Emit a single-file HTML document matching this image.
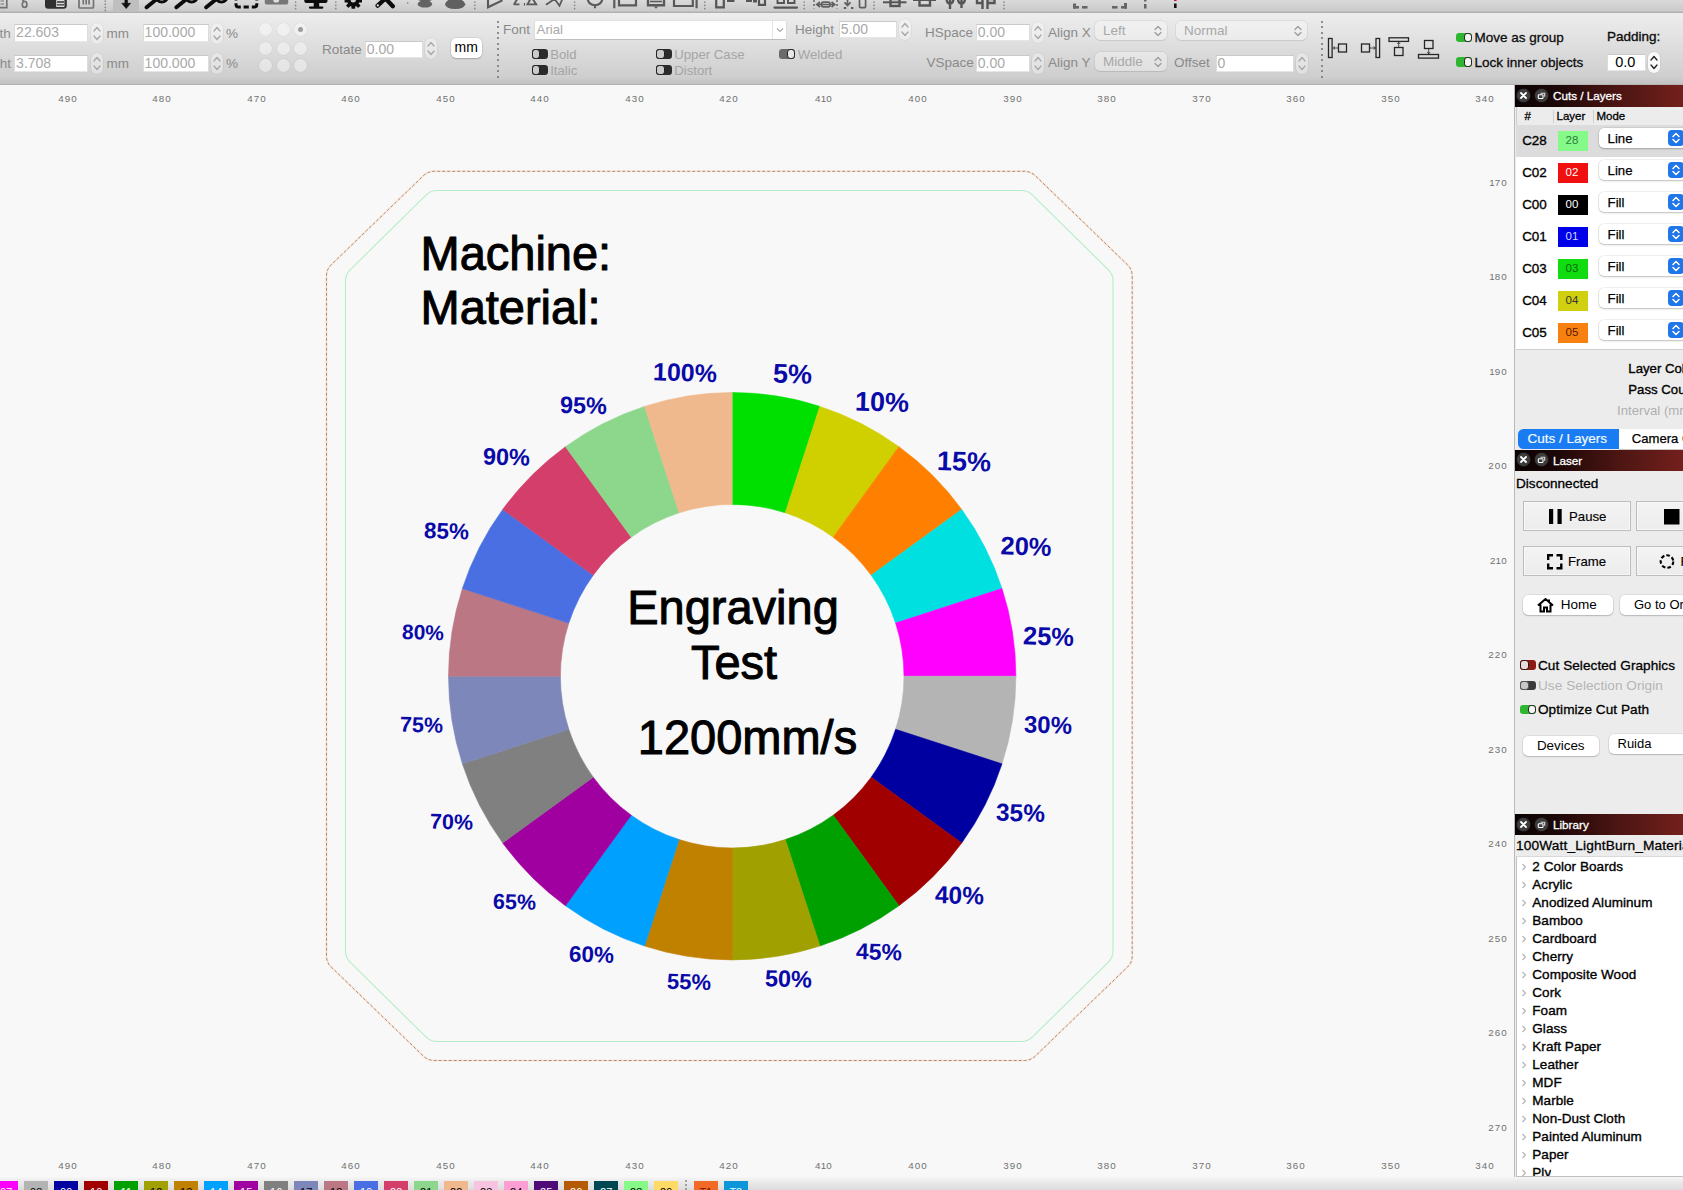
<!DOCTYPE html>
<html><head><meta charset="utf-8"><title>LightBurn - Engraving Test</title>
<style>
*{box-sizing:border-box;margin:0;padding:0}
html,body{width:1683px;height:1190px;overflow:hidden;background:#f8f8f8;font-family:"Liberation Sans",sans-serif;font-size:13px;color:#000}
.abs{position:absolute}
#top{position:absolute;left:0;top:0;width:1683px;height:13px;background:linear-gradient(#dadada,#cbcbcb 82%,#a9a9a9);overflow:hidden}
#tb{position:absolute;left:0;top:13px;width:1683px;height:72px;background:linear-gradient(#ededed,#e2e2e2 35%,#cecece 90%,#c2c2c2);border-bottom:1px solid #b4b4b4}
#canvas{position:absolute;left:0;top:85px;width:1515px;height:1092px;background:#f8f8f8;overflow:hidden}
#side{position:absolute;left:1514px;top:85px;width:169px;height:1092px;background:#ececec;overflow:hidden;border-left:1px solid #b9b9b9;padding:0}
#side>div,#side>svg{margin-left:0}
#bot{position:absolute;left:0;top:1176.5px;width:1683px;height:13.5px;background:linear-gradient(#f6f6f6,#ebebeb 35%,#dcdcdc);overflow:hidden}
.t{position:absolute;white-space:nowrap;line-height:16px;height:16px}
.g{color:#8a8a8a}
.inp{position:absolute;background:#fff;border-top:1px solid #c9c9c9;border-left:1px solid #dcdcdc;border-right:1px solid #dcdcdc;border-bottom:1px solid #e6e6e6;color:#a9a9a9;font-size:14px;line-height:15.6px;padding-left:.8px;white-space:nowrap;overflow:hidden}
.stp{position:absolute;width:12px;height:21px;border-radius:6px;background:rgba(255,255,255,.35);box-shadow:0 0 0 .5px rgba(0,0,0,.08)}
.dd{position:absolute;border-radius:5px;background:rgba(255,255,255,.35);box-shadow:0 0 0 .5px rgba(0,0,0,.10),0 1px 1px rgba(0,0,0,.06);color:#a8a8a8;font-size:13.5px;line-height:18px;padding-left:8px;padding-top:.8px;white-space:nowrap}
.btnw{position:absolute;border-radius:5px;background:#fff;box-shadow:0 0 0 .5px rgba(0,0,0,.12),0 1px 1.5px rgba(0,0,0,.18);font-size:13px;text-align:center;white-space:nowrap}
.tog{position:absolute;width:16.4px;height:9.4px;border-radius:3.2px}
.tog i{position:absolute;top:0;width:8.6px;height:9.4px;border-radius:3.2px;border:1.2px solid #1c1c1c;background:#ddd}
.rn{position:absolute;font-size:9.8px;letter-spacing:1px;color:#707070;line-height:12px;height:12px;width:40px;text-align:center;white-space:nowrap;padding-left:.7px}
.hdr{position:absolute;left:0;width:168px;height:21.5px;background:linear-gradient(90deg,#0a0202 0%,#1c0707 25%,#4a1512 60%,#74201c 100%);color:#fff;font-size:11.7px;line-height:22.5px;white-space:nowrap;-webkit-text-stroke:.3px #fff}
.hdr b{position:absolute;top:3.8px;width:13px;height:13px;border-radius:7px;background:#3d3d3d;box-shadow:0 0 1.5px #4a4a4a}
.hdr b svg{display:block}
.row{position:absolute;left:1px;width:167px;height:32px;background:#fff}
.sw{position:absolute;left:42px;top:6px;width:30px;height:20px;font-size:11.5px;line-height:19.4px;text-align:center;padding-right:2px}
.cn{position:absolute;left:6.2px;top:8.3px;font-size:13.4px;line-height:16px;-webkit-text-stroke:.35px #000}
.md{position:absolute;left:83px;top:3px;width:90px;height:20px;border-radius:5px;background:#fff;box-shadow:0 0 0 .5px rgba(0,0,0,.10),0 1px 2px rgba(0,0,0,.22);font-size:13.2px;line-height:21.6px;padding-left:8.6px;-webkit-text-stroke:.25px #000}
.md u{position:absolute;left:69px;top:2px;width:16px;height:16px;border-radius:4px;background:#1f76e8}
.li{position:absolute;left:17.3px;font-size:13.5px;letter-spacing:.05px;line-height:18px;height:18px;white-space:nowrap;-webkit-text-stroke:.35px #000}
.ch{position:absolute;left:6px;width:6px;height:18px}
.pal{position:absolute;top:4.5px;width:24px;height:12px;font-size:11px;line-height:14px;text-align:center;padding-top:3.5px}
</style></head><body>

<div id="top"><svg width="1683" height="13" viewBox="0 0 1683 13">
<rect x="113" y="0" width="26" height="12" fill="#bfbfbf"/>
<g fill="none" stroke="#737373" stroke-width="1.7">
<path d="M-2 -3H6.8V7.6H-2"/><path d="M0.5 1H4M0.5 4H4" stroke-width="1.1"/>
<ellipse cx="24.6" cy="4.4" rx="2.3" ry="3"/><path d="M22 -1L24 2"/>
<path d="M79 -2V7.5Q79 8 80 8H92.5Q93.5 8 93.5 7V-2M83.3 -2V4.6M86.2 -2V4.6M89.1 -2V4.6"/>
</g>
<path d="M45 -2H66.8V5.5Q66.8 8.7 63.6 8.7H48.2Q45 8.7 45 5.5Z" fill="#303030"/>
<path d="M56.2 -1H64.4V7H56.2Z" fill="#dcdcdc"/><path d="M57 2H64M57 4.9H64" stroke="#303030" stroke-width="1.4"/>
<g fill="#858585"><circle cx="105.3" cy="1" r=".85"/><circle cx="105.3" cy="4.2" r=".85"/><circle cx="105.3" cy="7.4" r=".85"/><circle cx="105.3" cy="10.4" r=".85"/></g>
<path d="M124.9 -2H127.5V3.3H130.6L126.2 8.6L121.8 3.3H124.9Z" fill="#111" stroke="#111" stroke-width=".6" stroke-linejoin="round"/>
<g stroke="#0c0c0c" stroke-width="3.9" stroke-linecap="round" fill="none">
<path d="M146.6 7.3L155.6 0"/><path d="M176.4 7.3L185.4 0"/><path d="M206.2 7.3L215.2 0"/>
</g>
<g stroke="#0c0c0c" stroke-width="3" fill="none"><circle cx="161.8" cy="-3.6" r="5.7"/><circle cx="191.6" cy="-3.6" r="5.7"/><circle cx="221.4" cy="-3.6" r="5.7"/></g>
<g fill="none" stroke="#0c0c0c" stroke-width="3" stroke-linecap="butt">
<path d="M236 3.2V4.5Q236 7 238.5 7H240.8"/><path d="M243.6 7H248.8"/><path d="M251.8 7H254.3Q256.8 7 256.8 4.5V3.2"/>
<path d="M236 -2V0.5M256.8 -2V0.5"/>
</g>
<path d="M264.8 -3H288.2V2.4Q288.2 4.6 286 4.6H267Q264.8 4.6 264.8 2.4Z" fill="#777"/><circle cx="276.2" cy="-0.4" r="3" fill="#dedede"/>
<g fill="#858585"><circle cx="295.6" cy="2" r=".85"/><circle cx="295.6" cy="5.3" r=".85"/><circle cx="295.6" cy="8.6" r=".85"/>
<circle cx="335.8" cy="2" r=".85"/><circle cx="335.8" cy="5.3" r=".85"/><circle cx="335.8" cy="8.6" r=".85"/></g>
<path d="M304.3 -2H327.5V1Q327.5 3 325.5 3H319.2V6.5H322.3Q323.4 6.5 323.4 7.6Q323.4 8.7 322.3 8.7H310Q308.9 8.7 308.9 7.6Q308.9 6.5 310 6.5H313.7V3H306.3Q304.3 3 304.3 1Z" fill="#0c0c0c"/>
<g fill="#0c0c0c"><circle cx="353.3" cy="0.6" r="6.1"/><rect x="351.4" y="5" width="3.8" height="3.7" rx=".6"/><rect x="344.6" y="-1.2" width="3.4" height="3.7" rx=".6"/><rect x="358.6" y="-1.2" width="3.4" height="3.7" rx=".6"/>
<rect x="346.7" y="3.7" width="3.6" height="3.6" rx=".6" transform="rotate(45 348.5 5.5)"/><rect x="356.3" y="3.7" width="3.6" height="3.6" rx=".6" transform="rotate(45 358.1 5.5)"/></g>
<circle cx="353.3" cy="-0.2" r="2.7" fill="#cdcdcd"/>
<g stroke="#0c0c0c" stroke-width="4.3" stroke-linecap="round"><path d="M377.6 5.6L385.5 -1.5"/><path d="M392.8 6.2L385.5 -1.5"/></g><circle cx="377.8" cy="5.4" r="1.1" fill="#e8e8e8"/>
<circle cx="407.7" cy="3" r=".8" fill="#777"/>
<path d="M417.5 4.5Q418 1.5 421 1Q417 0 414.5 -2H435.5Q433 0 429.5 1Q432 2 432.3 4.5Q431 7.6 425 7.6Q419 7.6 417.5 4.5Z" fill="#636363"/>
<path d="M445 4.2Q446.5 -1 455.2 -2Q463.6 -1 465.3 4.2Q464.5 8.9 455.2 9Q445.8 8.9 445 4.2Z" fill="#606060"/>
<g fill="#858585"><circle cx="474.8" cy="2" r=".85"/><circle cx="474.8" cy="5.3" r=".85"/><circle cx="474.8" cy="8.6" r=".85"/></g>
<g fill="none" stroke="#5a5a5a" stroke-width="2.1">
<path d="M488 -2V7.3L502.5 0.3"/>
<path d="M514 4.4L518.5 -3M519.5 4.4H513.5M527.5 4.4L531.5 -3L536.2 4.4Z" stroke-width="1.9"/><path d="M524.5 3V5.5" stroke-width="1.2"/>
<path d="M546 4.8L556 -2M553.5 -2.5L559.5 5.8L563 -2.5" stroke-width="1.8"/>
<path d="M587.3 -3Q587.8 4.8 595 5.2Q602.2 4.8 602.7 -3M595 5V8.3"/>
</g>
<g fill="#858585"><circle cx="574.6" cy="2" r=".85"/><circle cx="574.6" cy="5.3" r=".85"/><circle cx="574.6" cy="8.6" r=".85"/></g>
<g fill="none" stroke="#5a5a5a" stroke-width="2.2">
<path d="M614.3 -3V8.2M619 -3V5.3H636V-3"/>
<path d="M648 -2V5.3H664V-2" stroke-width="2.4"/><path d="M650 1.5H662" stroke-width="1.6"/><path d="M654.5 6.3l1.5 1.6 1.5-1.6" stroke-width="1.1"/>
<path d="M674 -3V6H692.8V-3M696.6 -3V8.2"/>
</g>
<g fill="#858585"><circle cx="704.8" cy="2" r=".85"/><circle cx="704.8" cy="5.3" r=".85"/><circle cx="704.8" cy="8.6" r=".85"/></g>
<g fill="none" stroke="#555" stroke-width="2.2">
<path d="M716.2 -3V7.3H723.8V-3"/><path d="M759 -3V4.8H765V-3"/><path d="M774.5 7.6H797" stroke-width="2.3" stroke-linecap="round"/><path d="M777.5 -2V3H784V-2M788 -2V3H794.5V-2" stroke-width="1.9"/>
</g>
<rect x="727" y="-1" width="7.5" height="3" fill="#555"/><rect x="746" y="-1" width="6" height="3" fill="#555"/><rect x="753" y="-1" width="4" height="3.5" fill="#555"/>
<g fill="#858585"><circle cx="804.2" cy="2" r=".85"/><circle cx="804.2" cy="5.3" r=".85"/><circle cx="804.2" cy="8.6" r=".85"/></g>
<g fill="none" stroke="#606060" stroke-width="1.7">
<path d="M817 4.5H834M820 2L816.8 4.5L820 7M831.5 2L834.7 4.5L831.5 7"/><rect x="821.5" y="2.1" width="8.5" height="4.8" rx="1.8"/>
<path d="M814 0V8.5M837 0V8.5" stroke-dasharray="2 2" stroke-width="1.4"/>
<path d="M847.5 -2V5M844.5 2.3L847.5 5.5L850.5 2.3"/><path d="M843.8 8H846.2M851 8H853.4" stroke-width="1.9"/>
<path d="M859.5 -3V6.6Q859.5 7.6 860.5 7.6H864.6Q865.6 7.6 865.6 6.6V-3"/>
</g>
<g fill="#858585"><circle cx="874" cy="2" r=".85"/><circle cx="874" cy="5.3" r=".85"/><circle cx="874" cy="8.6" r=".85"/></g>
<g fill="none" stroke="#555" stroke-width="2">
<path d="M883 2.3H906.5"/><rect x="890.5" y="-1" width="9" height="7" stroke-width="2.4"/>
<path d="M913 0H936"/><path d="M919.5 0V5.5H930V0" stroke-width="2.4"/>
<path d="M950 -2V9M946.5 -2Q946.5 3.5 950 3.5Q953.5 3.5 953.5 -2M961.5 -2V8M958 -2Q958 3.5 961.5 3.5Q965 3.5 965 -2" stroke-width="2.4"/>
<path d="M977 -2V3H983.5M982.5 -2V9M987.5 9V-1H994.5V3H988" stroke-width="2.4"/>
</g>
<g fill="#858585"><circle cx="1004" cy="2" r=".85"/><circle cx="1004" cy="5.3" r=".85"/><circle cx="1004" cy="8.6" r=".85"/></g>
<g fill="#666"><rect x="1073" y="3.5" width="3" height="5"/><rect x="1073" y="6" width="6" height="2.6"/><rect x="1082" y="6" width="5.5" height="2.6"/>
<rect x="1112" y="6" width="5.5" height="2.6"/><rect x="1121" y="6" width="6" height="2.6"/><rect x="1124" y="3" width="3" height="5.6"/>
<rect x="1144" y="4" width="2.5" height="4.5"/><rect x="1144" y="0" width="2.5" height="1.5"/></g>
<rect x="1174" y="3.5" width="2.6" height="4.5" fill="#111"/><rect x="1174" y="-1" width="2.6" height="2" fill="#c03"/>

</svg></div>
<div id="tb">
<div class="t g" style="left:-40px;width:50.7px;text-align:right;top:12.7px;font-size:13.5px">Width</div>
<div class="t g" style="left:-40px;width:51px;text-align:right;top:42.7px;font-size:13.5px">Height</div>
<div class="inp" style="left:14.3px;top:11.399999999999999px;width:74.2px;height:17.2px;">22.603</div>
<div class="inp" style="left:14.3px;top:41.6px;width:74.2px;height:17.2px;">3.708</div>
<div class="stp" style="left:91px;top:10px"><svg width="12" height="21" viewBox="0 0 12 21"><path d="M3 8L6 4.5L9 8M3 13L6 16.5L9 13" fill="none" stroke="#a8a8a8" stroke-width="1.3" stroke-linecap="round" stroke-linejoin="round"/></svg></div>
<div class="stp" style="left:91px;top:40px"><svg width="12" height="21" viewBox="0 0 12 21"><path d="M3 8L6 4.5L9 8M3 13L6 16.5L9 13" fill="none" stroke="#a8a8a8" stroke-width="1.3" stroke-linecap="round" stroke-linejoin="round"/></svg></div>
<div class="t g" style="left:106.5px;top:12.7px;font-size:13.5px;">mm</div>
<div class="t g" style="left:106.5px;top:42.7px;font-size:13.5px;">mm</div>
<div class="inp" style="left:142.8px;top:11.399999999999999px;width:66.2px;height:17.2px;">100.000</div>
<div class="inp" style="left:142.8px;top:41.6px;width:66.2px;height:17.2px;">100.000</div>
<div class="stp" style="left:211px;top:10px"><svg width="12" height="21" viewBox="0 0 12 21"><path d="M3 8L6 4.5L9 8M3 13L6 16.5L9 13" fill="none" stroke="#a8a8a8" stroke-width="1.3" stroke-linecap="round" stroke-linejoin="round"/></svg></div>
<div class="stp" style="left:211px;top:40px"><svg width="12" height="21" viewBox="0 0 12 21"><path d="M3 8L6 4.5L9 8M3 13L6 16.5L9 13" fill="none" stroke="#a8a8a8" stroke-width="1.3" stroke-linecap="round" stroke-linejoin="round"/></svg></div>
<div class="t g" style="left:226px;top:12.7px;font-size:13.5px;">%</div>
<div class="t g" style="left:226px;top:42.7px;font-size:13.5px;">%</div>
<div class="abs" style="left:259.3px;top:10.100000000000001px;width:13px;height:13px;border-radius:7px;background:rgba(255,255,255,.42);box-shadow:0 0 0 .5px rgba(0,0,0,.06)"></div>
<div class="abs" style="left:276.5px;top:10.100000000000001px;width:13px;height:13px;border-radius:7px;background:rgba(255,255,255,.42);box-shadow:0 0 0 .5px rgba(0,0,0,.06)"></div>
<div class="abs" style="left:293.5px;top:10.100000000000001px;width:13px;height:13px;border-radius:7px;background:rgba(255,255,255,.42);box-shadow:0 0 0 .5px rgba(0,0,0,.06)"></div>
<div class="abs" style="left:259.3px;top:28.5px;width:13px;height:13px;border-radius:7px;background:rgba(255,255,255,.42);box-shadow:0 0 0 .5px rgba(0,0,0,.06)"></div>
<div class="abs" style="left:276.5px;top:28.5px;width:13px;height:13px;border-radius:7px;background:rgba(255,255,255,.42);box-shadow:0 0 0 .5px rgba(0,0,0,.06)"></div>
<div class="abs" style="left:293.5px;top:28.5px;width:13px;height:13px;border-radius:7px;background:rgba(255,255,255,.42);box-shadow:0 0 0 .5px rgba(0,0,0,.06)"></div>
<div class="abs" style="left:259.3px;top:46.3px;width:13px;height:13px;border-radius:7px;background:rgba(255,255,255,.42);box-shadow:0 0 0 .5px rgba(0,0,0,.06)"></div>
<div class="abs" style="left:276.5px;top:46.3px;width:13px;height:13px;border-radius:7px;background:rgba(255,255,255,.42);box-shadow:0 0 0 .5px rgba(0,0,0,.06)"></div>
<div class="abs" style="left:293.5px;top:46.3px;width:13px;height:13px;border-radius:7px;background:rgba(255,255,255,.42);box-shadow:0 0 0 .5px rgba(0,0,0,.06)"></div>
<div class="abs" style="left:297.5px;top:14.100000000000001px;width:5px;height:5px;border-radius:3px;background:#9c9c9c"></div>
<div class="t g" style="left:322px;top:28.7px;font-size:13.5px;">Rotate</div>
<div class="inp" style="left:365px;top:28px;width:58px;height:17px;">0.00</div>
<div class="stp" style="left:425px;top:25px"><svg width="12" height="21" viewBox="0 0 12 21"><path d="M3 8L6 4.5L9 8M3 13L6 16.5L9 13" fill="none" stroke="#a8a8a8" stroke-width="1.3" stroke-linecap="round" stroke-linejoin="round"/></svg></div>
<div class="btnw" style="left:450.5px;top:25px;width:31.5px;height:20px;line-height:18px;font-size:14px">mm</div>
<div class="abs" style="left:497.40000000000003px;top:7.8px;width:1.8px;height:1.8px;border-radius:1px;background:#707070"></div>
<div class="abs" style="left:497.40000000000003px;top:13.3px;width:1.8px;height:1.8px;border-radius:1px;background:#707070"></div>
<div class="abs" style="left:497.40000000000003px;top:18.8px;width:1.8px;height:1.8px;border-radius:1px;background:#707070"></div>
<div class="abs" style="left:497.40000000000003px;top:24.3px;width:1.8px;height:1.8px;border-radius:1px;background:#707070"></div>
<div class="abs" style="left:497.40000000000003px;top:29.8px;width:1.8px;height:1.8px;border-radius:1px;background:#707070"></div>
<div class="abs" style="left:497.40000000000003px;top:35.3px;width:1.8px;height:1.8px;border-radius:1px;background:#707070"></div>
<div class="abs" style="left:497.40000000000003px;top:40.8px;width:1.8px;height:1.8px;border-radius:1px;background:#707070"></div>
<div class="abs" style="left:497.40000000000003px;top:46.3px;width:1.8px;height:1.8px;border-radius:1px;background:#707070"></div>
<div class="abs" style="left:497.40000000000003px;top:51.8px;width:1.8px;height:1.8px;border-radius:1px;background:#707070"></div>
<div class="abs" style="left:497.40000000000003px;top:57.3px;width:1.8px;height:1.8px;border-radius:1px;background:#707070"></div>
<div class="abs" style="left:497.40000000000003px;top:62.8px;width:1.8px;height:1.8px;border-radius:1px;background:#707070"></div>
<div class="t g" style="left:503px;top:8.9px;font-size:13.5px;">Font</div>
<div class="inp" style="left:534px;top:6.800000000000001px;width:253px;height:20.6px;border-radius:2px;padding-left:1.6px;line-height:18.5px;font-size:13.2px;border-bottom:1px solid #bdbdbd;border-top:1px solid #e2e2e2">Arial</div>
<div class="abs" style="left:772px;top:8px;width:14px;height:18px;border-left:1px solid #e4e4e4"><svg width="14" height="18"><path d="M4 7.5L7 10.5L10 7.5" fill="none" stroke="#aaa" stroke-width="1.2"/></svg></div>
<div class="t g" style="left:795px;top:8.9px;font-size:13.5px;">Height</div>
<div class="inp" style="left:839px;top:8px;width:58px;height:16.5px;">5.00</div>
<div class="stp" style="left:898.5px;top:5.5px"><svg width="12" height="21" viewBox="0 0 12 21"><path d="M3 8L6 4.5L9 8M3 13L6 16.5L9 13" fill="none" stroke="#a8a8a8" stroke-width="1.3" stroke-linecap="round" stroke-linejoin="round"/></svg></div>
<div class="tog" style="left:531.6px;top:36.3px;background:#2b2b2b"><i style="left:0;background:#cbcbcb"></i></div>
<div class="t g" style="left:550.2px;top:33.5px;font-size:13.2px;color:#a5a5a5">Bold</div>
<div class="tog" style="left:531.6px;top:52.3px;background:#2b2b2b"><i style="left:0;background:#cbcbcb"></i></div>
<div class="t g" style="left:550.2px;top:49.5px;font-size:13.2px;color:#a5a5a5">Italic</div>
<div class="tog" style="left:656px;top:36.3px;background:#2b2b2b"><i style="left:0;background:#cbcbcb"></i></div>
<div class="t g" style="left:674.2px;top:33.5px;font-size:13.2px;color:#a5a5a5">Upper Case</div>
<div class="tog" style="left:656px;top:52.3px;background:#2b2b2b"><i style="left:0;background:#cbcbcb"></i></div>
<div class="t g" style="left:674.2px;top:49.5px;font-size:13.2px;color:#a5a5a5">Distort</div>
<div class="tog" style="left:779px;top:36.3px;background:#6a6a6a"><i style="left:7.8px;background:#e6e6e6"></i></div>
<div class="t g" style="left:797.8px;top:33.5px;font-size:13.2px;color:#a5a5a5">Welded</div>
<div class="t g" style="left:925px;top:11.7px;font-size:13.5px;">HSpace</div>
<div class="inp" style="left:976px;top:11px;width:54px;height:17px;">0.00</div>
<div class="stp" style="left:1031.5px;top:9px"><svg width="12" height="21" viewBox="0 0 12 21"><path d="M3 8L6 4.5L9 8M3 13L6 16.5L9 13" fill="none" stroke="#a8a8a8" stroke-width="1.3" stroke-linecap="round" stroke-linejoin="round"/></svg></div>
<div class="t g" style="left:926.5px;top:42.2px;font-size:13.5px;">VSpace</div>
<div class="inp" style="left:976px;top:42px;width:54px;height:17px;">0.00</div>
<div class="stp" style="left:1031.5px;top:40px"><svg width="12" height="21" viewBox="0 0 12 21"><path d="M3 8L6 4.5L9 8M3 13L6 16.5L9 13" fill="none" stroke="#a8a8a8" stroke-width="1.3" stroke-linecap="round" stroke-linejoin="round"/></svg></div>
<div class="t g" style="left:1048px;top:11.7px;font-size:13.5px;">Align X</div>
<div class="t g" style="left:1048px;top:42.2px;font-size:13.5px;">Align Y</div>
<div class="dd" style="left:1095px;top:8px;width:72px;height:19px;line-height:18px">Left<svg class="abs" style="right:3px;top:2.5px" width="12" height="14"><path d="M3 5.5L6 2.5L9 5.5M3 8.5L6 11.5L9 8.5" fill="none" stroke="#9a9a9a" stroke-width="1.2" stroke-linecap="round" stroke-linejoin="round"/></svg></div>
<div class="dd" style="left:1176px;top:8px;width:131px;height:19px;line-height:18px">Normal<svg class="abs" style="right:3px;top:2.5px" width="12" height="14"><path d="M3 5.5L6 2.5L9 5.5M3 8.5L6 11.5L9 8.5" fill="none" stroke="#9a9a9a" stroke-width="1.2" stroke-linecap="round" stroke-linejoin="round"/></svg></div>
<div class="dd" style="left:1095px;top:39px;width:72px;height:19px;line-height:18px">Middle<svg class="abs" style="right:3px;top:2.5px" width="12" height="14"><path d="M3 5.5L6 2.5L9 5.5M3 8.5L6 11.5L9 8.5" fill="none" stroke="#9a9a9a" stroke-width="1.2" stroke-linecap="round" stroke-linejoin="round"/></svg></div>
<div class="t g" style="left:1174px;top:42.2px;font-size:13.5px;">Offset</div>
<div class="inp" style="left:1215.8px;top:41.6px;width:78.4px;height:17.2px;">0</div>
<div class="stp" style="left:1296px;top:40px"><svg width="12" height="21" viewBox="0 0 12 21"><path d="M3 8L6 4.5L9 8M3 13L6 16.5L9 13" fill="none" stroke="#a8a8a8" stroke-width="1.3" stroke-linecap="round" stroke-linejoin="round"/></svg></div>
<div class="abs" style="left:1321.1px;top:7.8px;width:1.8px;height:1.8px;border-radius:1px;background:#707070"></div>
<div class="abs" style="left:1321.1px;top:13.3px;width:1.8px;height:1.8px;border-radius:1px;background:#707070"></div>
<div class="abs" style="left:1321.1px;top:18.8px;width:1.8px;height:1.8px;border-radius:1px;background:#707070"></div>
<div class="abs" style="left:1321.1px;top:24.3px;width:1.8px;height:1.8px;border-radius:1px;background:#707070"></div>
<div class="abs" style="left:1321.1px;top:29.8px;width:1.8px;height:1.8px;border-radius:1px;background:#707070"></div>
<div class="abs" style="left:1321.1px;top:35.3px;width:1.8px;height:1.8px;border-radius:1px;background:#707070"></div>
<div class="abs" style="left:1321.1px;top:40.8px;width:1.8px;height:1.8px;border-radius:1px;background:#707070"></div>
<div class="abs" style="left:1321.1px;top:46.3px;width:1.8px;height:1.8px;border-radius:1px;background:#707070"></div>
<div class="abs" style="left:1321.1px;top:51.8px;width:1.8px;height:1.8px;border-radius:1px;background:#707070"></div>
<div class="abs" style="left:1321.1px;top:57.3px;width:1.8px;height:1.8px;border-radius:1px;background:#707070"></div>
<div class="abs" style="left:1321.1px;top:62.8px;width:1.8px;height:1.8px;border-radius:1px;background:#707070"></div>
<svg class="abs" style="left:1326px;top:20px" width="116" height="30" viewBox="1326 33 116 30">
<g fill="none" stroke="#262626" stroke-width="1.3">
<rect x="1328.5" y="38.5" width="3.6" height="19"/><rect x="1338.5" y="44" width="8" height="8"/><path d="M1333 48H1338M1335 46.5L1333.3 48L1335 49.5" stroke-width=".8"/>
<rect x="1376" y="38.5" width="3.6" height="19"/><rect x="1361.5" y="44" width="8" height="8"/><path d="M1370 48H1375.5M1373.5 46.5L1375.3 48L1373.5 49.5" stroke-width=".8"/>
<rect x="1389" y="37.8" width="19.5" height="3.6"/><rect x="1394.5" y="47.5" width="8.5" height="8"/><path d="M1398.7 42V47M1397.2 44L1398.7 42.3L1400.2 44" stroke-width=".8"/>
<rect x="1418.5" y="54.5" width="20" height="3.6"/><rect x="1424.5" y="40.5" width="8.5" height="8"/><path d="M1428.7 49V54M1427.2 52L1428.7 53.7L1430.2 52" stroke-width=".8"/>
</g></svg>
<div class="tog" style="left:1456px;top:19.5px;background:#2fb52f"><i style="left:7.8px;background:#f4f4f4"></i></div>
<div class="t " style="left:1474.5px;top:17px;font-size:13.5px;color:#0a0a0a;-webkit-text-stroke:.3px #111">Move as group</div>
<div class="tog" style="left:1456px;top:44.3px;background:#2fb52f"><i style="left:7.8px;background:#f4f4f4"></i></div>
<div class="t " style="left:1474.5px;top:42px;font-size:13.5px;color:#0a0a0a;-webkit-text-stroke:.3px #111">Lock inner objects</div>
<div class="t " style="left:1607px;top:15.5px;font-size:13.5px;color:#0a0a0a;-webkit-text-stroke:.35px #111">Padding:</div>
<div class="inp" style="left:1606.5px;top:41px;width:39.5px;height:16.5px;color:#000;font-size:14.5px;text-align:center;padding-left:0;padding-right:2px">0.0</div>
<div class="stp" style="left:1648px;top:39px;background:rgba(255,255,255,.85)"><svg width="12" height="21" viewBox="0 0 12 21"><path d="M3 8L6 4.5L9 8M3 13L6 16.5L9 13" fill="none" stroke="#222" stroke-width="1.3" stroke-linecap="round" stroke-linejoin="round"/></svg></div>
</div>
<div id="canvas">
<div class="rn" style="left:47.6px;top:8px">490</div>
<div class="rn" style="left:47.6px;top:1075px">490</div>
<div class="rn" style="left:141.6px;top:8px">480</div>
<div class="rn" style="left:141.6px;top:1075px">480</div>
<div class="rn" style="left:236.6px;top:8px">470</div>
<div class="rn" style="left:236.6px;top:1075px">470</div>
<div class="rn" style="left:330.6px;top:8px">460</div>
<div class="rn" style="left:330.6px;top:1075px">460</div>
<div class="rn" style="left:425.6px;top:8px">450</div>
<div class="rn" style="left:425.6px;top:1075px">450</div>
<div class="rn" style="left:519.6px;top:8px">440</div>
<div class="rn" style="left:519.6px;top:1075px">440</div>
<div class="rn" style="left:614.6px;top:8px">430</div>
<div class="rn" style="left:614.6px;top:1075px">430</div>
<div class="rn" style="left:708.6px;top:8px">420</div>
<div class="rn" style="left:708.6px;top:1075px">420</div>
<div class="rn" style="left:803.6px;top:8px">4<span style="margin:0 -.9px 0 -.8px">1</span>0</div>
<div class="rn" style="left:803.6px;top:1075px">4<span style="margin:0 -.9px 0 -.8px">1</span>0</div>
<div class="rn" style="left:897.6px;top:8px">400</div>
<div class="rn" style="left:897.6px;top:1075px">400</div>
<div class="rn" style="left:992.6px;top:8px">390</div>
<div class="rn" style="left:992.6px;top:1075px">390</div>
<div class="rn" style="left:1086.6px;top:8px">380</div>
<div class="rn" style="left:1086.6px;top:1075px">380</div>
<div class="rn" style="left:1181.6px;top:8px">370</div>
<div class="rn" style="left:1181.6px;top:1075px">370</div>
<div class="rn" style="left:1275.6px;top:8px">360</div>
<div class="rn" style="left:1275.6px;top:1075px">360</div>
<div class="rn" style="left:1370.6px;top:8px">350</div>
<div class="rn" style="left:1370.6px;top:1075px">350</div>
<div class="rn" style="left:1464.6px;top:8px">340</div>
<div class="rn" style="left:1464.6px;top:1075px">340</div>
<div class="rn" style="left:1467.6px;text-align:right;padding-left:0;top:92.30000000000001px"><span style="margin:0 -.9px 0 -.8px">1</span>70</div>
<div class="rn" style="left:1467.6px;text-align:right;padding-left:0;top:186.3px"><span style="margin:0 -.9px 0 -.8px">1</span>80</div>
<div class="rn" style="left:1467.6px;text-align:right;padding-left:0;top:281.3px"><span style="margin:0 -.9px 0 -.8px">1</span>90</div>
<div class="rn" style="left:1467.6px;text-align:right;padding-left:0;top:375.3px">200</div>
<div class="rn" style="left:1467.6px;text-align:right;padding-left:0;top:470.29999999999995px">2<span style="margin:0 -.9px 0 -.8px">1</span>0</div>
<div class="rn" style="left:1467.6px;text-align:right;padding-left:0;top:564.3px">220</div>
<div class="rn" style="left:1467.6px;text-align:right;padding-left:0;top:659.3px">230</div>
<div class="rn" style="left:1467.6px;text-align:right;padding-left:0;top:753.3px">240</div>
<div class="rn" style="left:1467.6px;text-align:right;padding-left:0;top:848.3px">250</div>
<div class="rn" style="left:1467.6px;text-align:right;padding-left:0;top:942.3px">260</div>
<div class="rn" style="left:1467.6px;text-align:right;padding-left:0;top:1037.3px">270</div>
<svg class="abs" style="left:0;top:0" width="1515" height="1093" viewBox="0 85 1515 1093" font-family='"Liberation Sans", sans-serif'>
<path d="M423.3 175.8Q428 171.3 434.5 171.3L1024.2 171.3Q1030.7 171.3 1035.4 175.8L1127.5 264.8Q1132.2 269.3 1132.2 275.8L1132.2 956Q1132.2 962.5 1127.5 967L1035.4 1056Q1030.7 1060.5 1024.2 1060.5L434.5 1060.5Q428 1060.5 423.3 1056L331.2 967Q326.5 962.5 326.5 956L326.5 275.8Q326.5 269.3 331.2 264.8Z" fill="none" stroke="#f9dcc4" stroke-width="2" opacity=".55"/>
<path d="M423.3 175.8Q428 171.3 434.5 171.3L1024.2 171.3Q1030.7 171.3 1035.4 175.8L1127.5 264.8Q1132.2 269.3 1132.2 275.8L1132.2 956Q1132.2 962.5 1127.5 967L1035.4 1056Q1030.7 1060.5 1024.2 1060.5L434.5 1060.5Q428 1060.5 423.3 1056L331.2 967Q326.5 962.5 326.5 956L326.5 275.8Q326.5 269.3 331.2 264.8Z" fill="none" stroke="#8f5a42" stroke-width=".8" stroke-dasharray="3 2" opacity=".85"/>
<path d="M425.9 195.1Q430.5 190.5 437 190.5L1021.5 190.5Q1028 190.5 1032.6 195.1L1108.4 269.9Q1113 274.5 1113 281L1113 951Q1113 957.5 1108.4 962.1L1032.6 1036.9Q1028 1041.5 1021.5 1041.5L437 1041.5Q430.5 1041.5 425.9 1036.9L350.1 962.1Q345.5 957.5 345.5 951L345.5 281Q345.5 274.5 350.1 269.9Z" fill="none" stroke="#b4eec4" stroke-width="1.1"/>
<path d="M732.2 392.5A283.7 283.7 0 0 1 819.87 406.39L785.29 512.81A171.8 171.8 0 0 0 732.2 504.4Z" fill="#00e000" stroke="#00e000" stroke-width=".6"/>
<path d="M819.87 406.39A283.7 283.7 0 0 1 898.95 446.68L833.18 537.21A171.8 171.8 0 0 0 785.29 512.81Z" fill="#d0d000" stroke="#d0d000" stroke-width=".6"/>
<path d="M898.95 446.68A283.7 283.7 0 0 1 961.72 509.45L871.19 575.22A171.8 171.8 0 0 0 833.18 537.21Z" fill="#ff8000" stroke="#ff8000" stroke-width=".6"/>
<path d="M961.72 509.45A283.7 283.7 0 0 1 1002.01 588.53L895.59 623.11A171.8 171.8 0 0 0 871.19 575.22Z" fill="#00e0e0" stroke="#00e0e0" stroke-width=".6"/>
<path d="M1002.01 588.53A283.7 283.7 0 0 1 1015.9 676.2L904 676.2A171.8 171.8 0 0 0 895.59 623.11Z" fill="#ff00ff" stroke="#ff00ff" stroke-width=".6"/>
<path d="M1015.9 676.2A283.7 283.7 0 0 1 1002.01 763.87L895.59 729.29A171.8 171.8 0 0 0 904 676.2Z" fill="#b4b4b4" stroke="#b4b4b4" stroke-width=".6"/>
<path d="M1002.01 763.87A283.7 283.7 0 0 1 961.72 842.95L871.19 777.18A171.8 171.8 0 0 0 895.59 729.29Z" fill="#0000a0" stroke="#0000a0" stroke-width=".6"/>
<path d="M961.72 842.95A283.7 283.7 0 0 1 898.95 905.72L833.18 815.19A171.8 171.8 0 0 0 871.19 777.18Z" fill="#a00000" stroke="#a00000" stroke-width=".6"/>
<path d="M898.95 905.72A283.7 283.7 0 0 1 819.87 946.01L785.29 839.59A171.8 171.8 0 0 0 833.18 815.19Z" fill="#00a000" stroke="#00a000" stroke-width=".6"/>
<path d="M819.87 946.01A283.7 283.7 0 0 1 732.2 959.9L732.2 848A171.8 171.8 0 0 0 785.29 839.59Z" fill="#a0a000" stroke="#a0a000" stroke-width=".6"/>
<path d="M732.2 959.9A283.7 283.7 0 0 1 644.53 946.01L679.11 839.59A171.8 171.8 0 0 0 732.2 848Z" fill="#c08000" stroke="#c08000" stroke-width=".6"/>
<path d="M644.53 946.01A283.7 283.7 0 0 1 565.45 905.72L631.22 815.19A171.8 171.8 0 0 0 679.11 839.59Z" fill="#00a0ff" stroke="#00a0ff" stroke-width=".6"/>
<path d="M565.45 905.72A283.7 283.7 0 0 1 502.68 842.95L593.21 777.18A171.8 171.8 0 0 0 631.22 815.19Z" fill="#a000a0" stroke="#a000a0" stroke-width=".6"/>
<path d="M502.68 842.95A283.7 283.7 0 0 1 462.39 763.87L568.81 729.29A171.8 171.8 0 0 0 593.21 777.18Z" fill="#808080" stroke="#808080" stroke-width=".6"/>
<path d="M462.39 763.87A283.7 283.7 0 0 1 448.5 676.2L560.4 676.2A171.8 171.8 0 0 0 568.81 729.29Z" fill="#7d87b9" stroke="#7d87b9" stroke-width=".6"/>
<path d="M448.5 676.2A283.7 283.7 0 0 1 462.39 588.53L568.81 623.11A171.8 171.8 0 0 0 560.4 676.2Z" fill="#bb7784" stroke="#bb7784" stroke-width=".6"/>
<path d="M462.39 588.53A283.7 283.7 0 0 1 502.68 509.45L593.21 575.22A171.8 171.8 0 0 0 568.81 623.11Z" fill="#4a6fe3" stroke="#4a6fe3" stroke-width=".6"/>
<path d="M502.68 509.45A283.7 283.7 0 0 1 565.45 446.68L631.22 537.21A171.8 171.8 0 0 0 593.21 575.22Z" fill="#d33f6a" stroke="#d33f6a" stroke-width=".6"/>
<path d="M565.45 446.68A283.7 283.7 0 0 1 644.53 406.39L679.11 512.81A171.8 171.8 0 0 0 631.22 537.21Z" fill="#8cd78c" stroke="#8cd78c" stroke-width=".6"/>
<path d="M644.53 406.39A283.7 283.7 0 0 1 732.2 392.5L732.2 504.4A171.8 171.8 0 0 0 679.11 512.81Z" fill="#f0b98d" stroke="#f0b98d" stroke-width=".6"/>
<g fill="#000" stroke="#000" stroke-width="1" stroke-linejoin="round" font-size="47">
<text transform="translate(420.5 270.2) scale(1 1.024)" text-anchor="start">Machine:</text>
<text transform="translate(420.5 324.2) scale(1 1.024)" text-anchor="start">Material:</text>
<text transform="translate(733 624.4) scale(1 1.024)" text-anchor="middle">Engraving</text>
<text transform="translate(734 679) scale(1 1.024)" text-anchor="middle">Test</text>
<text transform="translate(747.5 754.3) scale(1 1.024)" text-anchor="middle">1200mm/s</text>
</g>
<g fill="#0a0aa8" font-weight="bold" text-anchor="middle">
<text x="792.5" y="383.2" font-size="27" transform="rotate(1.7 792.5 373.5)">5%</text>
<text x="882" y="411.2" font-size="27" transform="rotate(1.7 882 401.5)">10%</text>
<text x="964" y="470.7" font-size="27" transform="rotate(1.7 964 461)">15%</text>
<text x="1026" y="555.1" font-size="25.5" transform="rotate(1.7 1026 546)">20%</text>
<text x="1048.5" y="645.1" font-size="25.5" transform="rotate(1.7 1048.5 636)">25%</text>
<text x="1048" y="733.1" font-size="24" transform="rotate(1.7 1048 724.5)">30%</text>
<text x="1020.5" y="821.3" font-size="24.5" transform="rotate(1.7 1020.5 812.5)">35%</text>
<text x="959.5" y="903.8" font-size="24.5" transform="rotate(1.7 959.5 895)">40%</text>
<text x="879" y="959.7" font-size="23" transform="rotate(1.7 879 951.5)">45%</text>
<text x="788.5" y="986.9" font-size="23.5" transform="rotate(1.7 788.5 978.5)">50%</text>
<text x="689" y="989.4" font-size="22" transform="rotate(1.7 689 981.5)">55%</text>
<text x="591.5" y="962.1" font-size="22.5" transform="rotate(1.7 591.5 954)">60%</text>
<text x="514.5" y="909.2" font-size="21.5" transform="rotate(1.7 514.5 901.5)">65%</text>
<text x="451.5" y="829.2" font-size="21.5" transform="rotate(1.7 451.5 821.5)">70%</text>
<text x="421.5" y="732.2" font-size="21.5" transform="rotate(1.7 421.5 724.5)">75%</text>
<text x="423" y="639.6" font-size="21" transform="rotate(1.7 423 632.1)">80%</text>
<text x="446.5" y="538.7" font-size="22.5" transform="rotate(1.7 446.5 530.6)">85%</text>
<text x="506.5" y="465" font-size="23.5" transform="rotate(1.7 506.5 456.6)">90%</text>
<text x="583.5" y="413.5" font-size="23.5" transform="rotate(1.7 583.5 405.1)">95%</text>
<text x="685" y="381.1" font-size="25" transform="rotate(1.7 685 372.1)">100%</text>
</g></svg></div>
<div id="bot">
<div class="pal" style="left:-5.8px;background:#ff00ff;color:#fff">07</div>
<div class="pal" style="left:24.2px;background:#b4b4b4;color:#000">08</div>
<div class="pal" style="left:54.2px;background:#0000a0;color:#fff">09</div>
<div class="pal" style="left:84.2px;background:#a00000;color:#fff">10</div>
<div class="pal" style="left:114.2px;background:#00a000;color:#fff">11</div>
<div class="pal" style="left:144.2px;background:#a0a000;color:#000">12</div>
<div class="pal" style="left:174.2px;background:#c08000;color:#000">13</div>
<div class="pal" style="left:204.2px;background:#00a0ff;color:#fff">14</div>
<div class="pal" style="left:234.2px;background:#a000a0;color:#fff">15</div>
<div class="pal" style="left:264.2px;background:#808080;color:#fff">16</div>
<div class="pal" style="left:294.2px;background:#7d87b9;color:#000">17</div>
<div class="pal" style="left:324.2px;background:#bb7784;color:#000">18</div>
<div class="pal" style="left:354.2px;background:#4a6fe3;color:#fff">19</div>
<div class="pal" style="left:384.2px;background:#d33f6a;color:#fff">20</div>
<div class="pal" style="left:414.2px;background:#8cd78c;color:#000">21</div>
<div class="pal" style="left:444.2px;background:#f0b98d;color:#000">22</div>
<div class="pal" style="left:474.2px;background:#f6c4e1;color:#000">23</div>
<div class="pal" style="left:504.2px;background:#fa9ed4;color:#000">24</div>
<div class="pal" style="left:534.2px;background:#500a78;color:#fff">25</div>
<div class="pal" style="left:564.2px;background:#b45a00;color:#fff">26</div>
<div class="pal" style="left:594.2px;background:#004754;color:#fff">27</div>
<div class="pal" style="left:624.2px;background:#86fa88;color:#000">28</div>
<div class="pal" style="left:654.2px;background:#ffdb66;color:#000">29</div>
<div class="abs" style="left:685px;top:3.5px;width:1.6px;height:1.6px;border-radius:1px;background:#888"></div>
<div class="abs" style="left:685px;top:7.5px;width:1.6px;height:1.6px;border-radius:1px;background:#888"></div>
<div class="abs" style="left:685px;top:11.5px;width:1.6px;height:1.6px;border-radius:1px;background:#888"></div>
<div class="pal" style="left:693.8px;background:#f36926;color:#7a1200">T1</div>
<div class="pal" style="left:723.8px;background:#0c96d9;color:#dff">T2</div>
</div>
<div id="side">
<div class="hdr" style="top:0px"><b style="left:2.2px"><svg width="13" height="13"><path d="M4 4L9 9M9 4L4 9" stroke="#fff" stroke-width="1.8" stroke-linecap="round"/></svg></b><b style="left:20.3px"><svg width="13" height="13"><path d="M5.5 4.3H9.7V7.7" fill="none" stroke="#ddd" stroke-width="1.1"/><rect x="3.3" y="5.8" width="4.7" height="3.7" rx=".8" fill="none" stroke="#fff" stroke-width="1.1"/></svg></b><span style="position:absolute;left:38px;top:0">Cuts / Layers</span></div>
<div class="abs" style="left:1px;top:21.5px;width:168px;height:243px;background:#fff;border-left:1px solid #cdcdcd;border-bottom:1px solid #d0d0d0"></div>
<div class="abs" style="left:1.5px;top:21.5px;width:167px;height:18.5px;background:#ececec;font-size:11.5px;line-height:19px;-webkit-text-stroke:.3px #000"><span class="abs" style="left:8px">#</span><span class="abs" style="left:40px">Layer</span><span class="abs" style="left:80px">Mode</span><i class="abs" style="left:36px;top:3px;width:1px;height:13px;background:#cfcfcf"></i><i class="abs" style="left:76px;top:3px;width:1px;height:13px;background:#cfcfcf"></i></div>
<div class="row" style="top:40px;background:#dcdcdc"><span class="cn">C28</span><span class="sw" style="background:#86fa88;color:#2a8040">28</span><span class="md">Line<u><svg width="16" height="16"><path d="M5 6.5L8 3.5L11 6.5M5 9.5L8 12.5L11 9.5" fill="none" stroke="#fff" stroke-width="1.5" stroke-linecap="round" stroke-linejoin="round"/></svg></u></span></div>
<div class="row" style="top:72px;background:#fff"><span class="cn">C02</span><span class="sw" style="background:#f01010;color:#fff">02</span><span class="md">Line<u><svg width="16" height="16"><path d="M5 6.5L8 3.5L11 6.5M5 9.5L8 12.5L11 9.5" fill="none" stroke="#fff" stroke-width="1.5" stroke-linecap="round" stroke-linejoin="round"/></svg></u></span></div>
<div class="row" style="top:104px;background:#fff"><span class="cn">C00</span><span class="sw" style="background:#000;color:#fff">00</span><span class="md">Fill<u><svg width="16" height="16"><path d="M5 6.5L8 3.5L11 6.5M5 9.5L8 12.5L11 9.5" fill="none" stroke="#fff" stroke-width="1.5" stroke-linecap="round" stroke-linejoin="round"/></svg></u></span></div>
<div class="row" style="top:136px;background:#fff"><span class="cn">C01</span><span class="sw" style="background:#0000e8;color:#cfd8ff">01</span><span class="md">Fill<u><svg width="16" height="16"><path d="M5 6.5L8 3.5L11 6.5M5 9.5L8 12.5L11 9.5" fill="none" stroke="#fff" stroke-width="1.5" stroke-linecap="round" stroke-linejoin="round"/></svg></u></span></div>
<div class="row" style="top:168px;background:#fff"><span class="cn">C03</span><span class="sw" style="background:#10dc10;color:#0b6b0b">03</span><span class="md">Fill<u><svg width="16" height="16"><path d="M5 6.5L8 3.5L11 6.5M5 9.5L8 12.5L11 9.5" fill="none" stroke="#fff" stroke-width="1.5" stroke-linecap="round" stroke-linejoin="round"/></svg></u></span></div>
<div class="row" style="top:200px;background:#fff"><span class="cn">C04</span><span class="sw" style="background:#d0d010;color:#333">04</span><span class="md">Fill<u><svg width="16" height="16"><path d="M5 6.5L8 3.5L11 6.5M5 9.5L8 12.5L11 9.5" fill="none" stroke="#fff" stroke-width="1.5" stroke-linecap="round" stroke-linejoin="round"/></svg></u></span></div>
<div class="row" style="top:232px;background:#fff"><span class="cn">C05</span><span class="sw" style="background:#f88010;color:#5a1a00">05</span><span class="md">Fill<u><svg width="16" height="16"><path d="M5 6.5L8 3.5L11 6.5M5 9.5L8 12.5L11 9.5" fill="none" stroke="#fff" stroke-width="1.5" stroke-linecap="round" stroke-linejoin="round"/></svg></u></span></div>
<div class="t" style="left:113.3px;top:275.8px;font-size:13.2px;-webkit-text-stroke:.35px #000">Layer Color</div>
<div class="t" style="left:113.3px;top:296.8px;font-size:13.2px;-webkit-text-stroke:.35px #000">Pass Count</div>
<div class="t" style="left:102px;top:317.6px;font-size:13.2px;color:#b0b0b0">Interval (mm)</div>
<div class="abs" style="left:2.5px;top:343.8px;width:101.5px;height:19.8px;border-radius:5.5px 0 0 5.5px;background:#1a7cf2;color:#f2fbff;font-size:13.5px;line-height:20px;text-align:center;white-space:nowrap;-webkit-text-stroke:.2px #f2fbff;padding-right:2px">Cuts / Layers</div>
<div class="abs" style="left:104px;top:343.8px;width:80px;height:19.8px;background:#fff;font-size:13.1px;line-height:20px;padding-left:12.8px;white-space:nowrap;box-shadow:0 1px 1px rgba(0,0,0,.15);-webkit-text-stroke:.25px #000">Camera Control</div>
<div class="hdr" style="top:364.6px"><b style="left:2.2px"><svg width="13" height="13"><path d="M4 4L9 9M9 4L4 9" stroke="#fff" stroke-width="1.8" stroke-linecap="round"/></svg></b><b style="left:20.3px"><svg width="13" height="13"><path d="M5.5 4.3H9.7V7.7" fill="none" stroke="#ddd" stroke-width="1.1"/><rect x="3.3" y="5.8" width="4.7" height="3.7" rx=".8" fill="none" stroke="#fff" stroke-width="1.1"/></svg></b><span style="position:absolute;left:38px;top:0">Laser</span></div>
<div class="t" style="left:1px;top:390.6px;font-size:13.6px;-webkit-text-stroke:.3px #000">Disconnected</div>
<div class="abs" style="left:8px;top:415.5px;width:108px;height:30.5px;background:linear-gradient(#f4f4f4,#ececec);border:1px solid #bdbdbd;box-shadow:inset 0 0 0 1px #f7f7f7;font-size:13.2px;line-height:29px;white-space:nowrap;-webkit-text-stroke:.15px #000"><svg class="abs" style="left:24px;top:7px" width="16" height="16"><rect x="1" y="0" width="4.2" height="15" fill="#000"/><rect x="9.5" y="0" width="4.2" height="15" fill="#000"/></svg><span class="abs" style="left:45px">Pause</span></div>
<div class="abs" style="left:120.5px;top:415.5px;width:108px;height:30.5px;background:linear-gradient(#f4f4f4,#ececec);border:1px solid #bdbdbd;box-shadow:inset 0 0 0 1px #f7f7f7;font-size:13.2px;line-height:29px;white-space:nowrap;-webkit-text-stroke:.15px #000"><svg class="abs" style="left:27px;top:7px" width="16" height="16"><rect x="0" y="0" width="15.5" height="15.5" fill="#000"/></svg></div>
<div class="abs" style="left:8px;top:460.5px;width:108px;height:30.5px;background:linear-gradient(#f4f4f4,#ececec);border:1px solid #bdbdbd;box-shadow:inset 0 0 0 1px #f7f7f7;font-size:13.2px;line-height:29px;white-space:nowrap;-webkit-text-stroke:.15px #000"><svg class="abs" style="left:23px;top:7px" width="16" height="16"><path d="M1.2 6V1.2H6M9.5 1.2H14.3V6M14.3 9.5V14.3H9.5M6 14.3H1.2V9.5" fill="none" stroke="#000" stroke-width="2.4"/></svg><span class="abs" style="left:44px">Frame</span></div>
<div class="abs" style="left:120.5px;top:460.5px;width:108px;height:30.5px;background:linear-gradient(#f4f4f4,#ececec);border:1px solid #bdbdbd;box-shadow:inset 0 0 0 1px #f7f7f7;font-size:13.2px;line-height:29px;white-space:nowrap;-webkit-text-stroke:.15px #000"><svg class="abs" style="left:22px;top:7px" width="16" height="16"><circle cx="8" cy="7.5" r="6.3" fill="none" stroke="#000" stroke-width="2.1" stroke-dasharray="3.6 2.05"/></svg><span class="abs" style="left:44px">Frame</span></div>
<div class="btnw" style="left:7.5px;top:510px;width:90px;height:20px;line-height:20px"><svg class="abs" style="left:14px;top:2.5px" width="17" height="15"><path d="M1 7.5L8.5 1L16 7.5M3.5 6.5V13.5H7V9.5H10V13.5H13.5V6.5M12 1.5V4" fill="none" stroke="#000" stroke-width="2"/></svg><span class="abs" style="left:38.3px;font-size:13.5px">Home</span></div>
<div class="btnw" style="left:105px;top:510px;width:90px;height:20px;line-height:20px;text-align:left;padding-left:14px">Go to Origin</div>
<div class="tog" style="left:5px;top:575.3px;background:#8e1b16"><i style="left:0;background:#e6dcdc;border-color:#2a0c0c"></i></div>
<div class="t" style="left:23px;top:572.6px;font-size:13.6px;letter-spacing:.05px;-webkit-text-stroke:.3px #000">Cut Selected Graphics</div>
<div class="tog" style="left:5px;top:595.5999999999999px;background:#3a3a3a"><i style="left:0;background:#c9c9c9;border-color:#555"></i></div>
<div class="t" style="left:23px;top:592.9px;font-size:13.6px;letter-spacing:.05px;color:#b5b5b5">Use Selection Origin</div>
<div class="tog" style="left:5px;top:619.5px;background:#2fb52f"><i style="left:7.8px;background:#f4f4f4"></i></div>
<div class="t" style="left:23px;top:616.8px;font-size:13.6px;letter-spacing:.05px;-webkit-text-stroke:.3px #000">Optimize Cut Path</div>
<div class="btnw" style="left:7.5px;top:650.5px;width:76.5px;height:20.5px;line-height:20.5px;font-size:13.4px">Devices</div>
<div class="btnw" style="left:93.5px;top:649px;width:90px;height:20px;line-height:19px;text-align:left;padding-left:9px">Ruida</div>
<div class="hdr" style="top:728.8px"><b style="left:2.2px"><svg width="13" height="13"><path d="M4 4L9 9M9 4L4 9" stroke="#fff" stroke-width="1.8" stroke-linecap="round"/></svg></b><b style="left:20.3px"><svg width="13" height="13"><path d="M5.5 4.3H9.7V7.7" fill="none" stroke="#ddd" stroke-width="1.1"/><rect x="3.3" y="5.8" width="4.7" height="3.7" rx=".8" fill="none" stroke="#fff" stroke-width="1.1"/></svg></b><span style="position:absolute;left:38px;top:0">Library</span></div>
<div class="t" style="left:1px;top:753.2px;font-size:13.7px;-webkit-text-stroke:.3px #000;letter-spacing:.15px">100Watt_LightBurn_Material_Library</div>
<div class="abs" style="left:1px;top:771px;width:168px;height:321px;background:#fff;border-left:1px solid #c4c4c4;border-top:1px solid #d9d9d9;border-bottom:1px solid #c0c0c0"></div>
<div class="li" style="top:772.6px">2 Color Boards</div>
<svg class="ch" style="top:772.6px" width="6" height="18"><path d="M1.5 6L4.5 9L1.5 12" fill="none" stroke="#b0b0b0" stroke-width="1.1"/></svg>
<div class="li" style="top:790.6px">Acrylic</div>
<svg class="ch" style="top:790.6px" width="6" height="18"><path d="M1.5 6L4.5 9L1.5 12" fill="none" stroke="#b0b0b0" stroke-width="1.1"/></svg>
<div class="li" style="top:808.6px">Anodized Aluminum</div>
<svg class="ch" style="top:808.6px" width="6" height="18"><path d="M1.5 6L4.5 9L1.5 12" fill="none" stroke="#b0b0b0" stroke-width="1.1"/></svg>
<div class="li" style="top:826.6px">Bamboo</div>
<svg class="ch" style="top:826.6px" width="6" height="18"><path d="M1.5 6L4.5 9L1.5 12" fill="none" stroke="#b0b0b0" stroke-width="1.1"/></svg>
<div class="li" style="top:844.6px">Cardboard</div>
<svg class="ch" style="top:844.6px" width="6" height="18"><path d="M1.5 6L4.5 9L1.5 12" fill="none" stroke="#b0b0b0" stroke-width="1.1"/></svg>
<div class="li" style="top:862.6px">Cherry</div>
<svg class="ch" style="top:862.6px" width="6" height="18"><path d="M1.5 6L4.5 9L1.5 12" fill="none" stroke="#b0b0b0" stroke-width="1.1"/></svg>
<div class="li" style="top:880.6px">Composite Wood</div>
<svg class="ch" style="top:880.6px" width="6" height="18"><path d="M1.5 6L4.5 9L1.5 12" fill="none" stroke="#b0b0b0" stroke-width="1.1"/></svg>
<div class="li" style="top:898.6px">Cork</div>
<svg class="ch" style="top:898.6px" width="6" height="18"><path d="M1.5 6L4.5 9L1.5 12" fill="none" stroke="#b0b0b0" stroke-width="1.1"/></svg>
<div class="li" style="top:916.6px">Foam</div>
<svg class="ch" style="top:916.6px" width="6" height="18"><path d="M1.5 6L4.5 9L1.5 12" fill="none" stroke="#b0b0b0" stroke-width="1.1"/></svg>
<div class="li" style="top:934.5999999999999px">Glass</div>
<svg class="ch" style="top:934.5999999999999px" width="6" height="18"><path d="M1.5 6L4.5 9L1.5 12" fill="none" stroke="#b0b0b0" stroke-width="1.1"/></svg>
<div class="li" style="top:952.5999999999999px">Kraft Paper</div>
<svg class="ch" style="top:952.5999999999999px" width="6" height="18"><path d="M1.5 6L4.5 9L1.5 12" fill="none" stroke="#b0b0b0" stroke-width="1.1"/></svg>
<div class="li" style="top:970.5999999999999px">Leather</div>
<svg class="ch" style="top:970.5999999999999px" width="6" height="18"><path d="M1.5 6L4.5 9L1.5 12" fill="none" stroke="#b0b0b0" stroke-width="1.1"/></svg>
<div class="li" style="top:988.5999999999999px">MDF</div>
<svg class="ch" style="top:988.5999999999999px" width="6" height="18"><path d="M1.5 6L4.5 9L1.5 12" fill="none" stroke="#b0b0b0" stroke-width="1.1"/></svg>
<div class="li" style="top:1006.5999999999999px">Marble</div>
<svg class="ch" style="top:1006.5999999999999px" width="6" height="18"><path d="M1.5 6L4.5 9L1.5 12" fill="none" stroke="#b0b0b0" stroke-width="1.1"/></svg>
<div class="li" style="top:1024.6px">Non-Dust Cloth</div>
<svg class="ch" style="top:1024.6px" width="6" height="18"><path d="M1.5 6L4.5 9L1.5 12" fill="none" stroke="#b0b0b0" stroke-width="1.1"/></svg>
<div class="li" style="top:1042.6px">Painted Aluminum</div>
<svg class="ch" style="top:1042.6px" width="6" height="18"><path d="M1.5 6L4.5 9L1.5 12" fill="none" stroke="#b0b0b0" stroke-width="1.1"/></svg>
<div class="li" style="top:1060.6px">Paper</div>
<svg class="ch" style="top:1060.6px" width="6" height="18"><path d="M1.5 6L4.5 9L1.5 12" fill="none" stroke="#b0b0b0" stroke-width="1.1"/></svg>
<div class="li" style="top:1078.6px;height:12.9px;overflow:hidden">Ply</div>
<svg class="ch" style="top:1078.6px" width="6" height="18"><path d="M1.5 6L4.5 9L1.5 12" fill="none" stroke="#b0b0b0" stroke-width="1.1"/></svg>
</div>
</body></html>
